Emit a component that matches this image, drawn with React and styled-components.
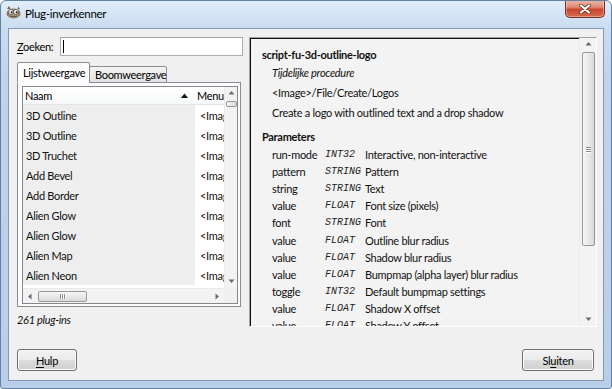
import React from "react";
import styled, { createGlobalStyle, css } from "styled-components";

const UI = `Lato, "Liberation Sans", "DejaVu Sans", sans-serif`;
const MONO = `"Liberation Mono", "DejaVu Sans Mono", monospace`;

const GlobalStyle = createGlobalStyle`
  html, body { margin: 0; padding: 0; background: #ffffff; }
  body { font-family: ${UI}; font-size: 11px; letter-spacing: -0.3px; color: #1e1e1e; }
  * { box-sizing: border-box; }
`;

const Window = styled.div`
  width: 612px;
  height: 389px;
  display: flex;
  flex-direction: column;
  border: 1px solid #62809f;
  border-radius: 6px 6px 3px 3px;
  background: linear-gradient(180deg, #e2edf9 0px, #cadcf1 27px, #bfd3ec 80px, #b9cee9 100%);
  overflow: hidden;
`;

const TitleBar = styled.div`
  height: 27px;
  flex: none;
  display: flex;
  align-items: flex-start;
  padding-left: 5px;
`;

const TitleIcon = styled.svg`
  margin-top: 4px;
  flex: none;
`;

const TitleText = styled.span`
  margin-top: 5px;
  margin-left: 4px;
  font-size: 11.5px;
  line-height: 15px;
  color: #000;
`;

const CloseButton = styled.div`
  margin-left: auto;
  margin-right: 6px;
  margin-top: -1px;
  width: 40px;
  height: 18px;
  border: 1px solid #7a2d22;
  border-top: none;
  border-radius: 0 0 5px 5px;
  background: linear-gradient(180deg, #ecb8ab 0%, #df8a75 42%, #c8482d 55%, #d66a4e 100%);
  box-shadow: inset 0 0 0 1px rgba(255, 255, 255, 0.35);
  display: flex;
  align-items: center;
  justify-content: center;
`;

const Client = styled.div`
  flex: 1;
  min-height: 0;
  margin: 0 7px 7px;
  background: #f0f0f0;
  border: 1px solid #8399b5;
  display: flex;
  flex-direction: column;
  padding: 8px 6px 9px 8px;
`;

const Main = styled.div`
  display: flex;
  gap: 6px;
  height: 290px;
  flex: none;
`;

const LeftPane = styled.div`
  width: 226px;
  flex: none;
  display: flex;
  flex-direction: column;
`;

const SearchRow = styled.div`
  display: flex;
  align-items: center;
  height: 19px;
  flex: none;
`;

const Label = styled.span`
  width: 43px;
  flex: none;
  color: #000;
`;

const Mnemonic = styled.span`
  text-decoration: underline;
  text-underline-offset: 2px;
`;

const SearchInput = styled.div`
  flex: 1;
  height: 19px;
  background: #fff;
  border: 1px solid #abadb3;
  border-top-color: #9ea1a8;
  display: flex;
  align-items: center;
  padding-left: 2px;
`;

const Caret = styled.span`
  width: 1px;
  height: 13px;
  background: #000;
`;

const Notebook = styled.div`
  margin-top: 6px;
  width: 224px;
  display: flex;
  flex-direction: column;
  flex: none;
`;

const TabStrip = styled.div`
  height: 21px;
  display: flex;
  align-items: flex-end;
  margin-bottom: -1px;
  position: relative;
  z-index: 1;
`;

const Tab = styled.div`
  border: 1px solid #898c95;
  border-radius: 2px 2px 0 0;
  display: flex;
  align-items: center;
  color: #000;
  white-space: nowrap;
  ${(p) =>
    p.$active
      ? css`
          height: 21px;
          width: 73px;
          padding-left: 5px;
          background: #fcfcfc;
          border-bottom-color: #fcfcfc;
        `
      : css`
          height: 17px;
          width: 78px;
          margin-left: -1px;
          padding-left: 5px;
          background: linear-gradient(180deg, #f4f4f4, #e2e2e2);
        `}
`;

const NotebookPage = styled.div`
  height: 225px;
  border: 1px solid #898c95;
  background: #fcfcfc;
  padding: 3px 2px 2px 4px;
`;

const TreeBox = styled.div`
  width: 216px;
  height: 218px;
  border: 1px solid #828790;
  background: #fff;
  display: grid;
  grid-template-columns: 201px 13px;
  grid-template-rows: 201px 15px;
`;

const ListArea = styled.div`
  overflow: hidden;
  display: flex;
  flex-direction: column;
  background: #fff;
`;

const HeaderRow = styled.div`
  height: 18px;
  flex: none;
  display: flex;
  background: linear-gradient(180deg, #ffffff, #f7f8f9);
  border-bottom: 1px solid #e5e5e5;
`;

const HeaderCell = styled.div`
  flex: none;
  width: ${(p) => p.$w}px;
  display: flex;
  align-items: center;
  padding-left: ${(p) => p.$pl}px;
  color: #000;
  white-space: nowrap;
`;

const SortArrow = styled.svg`
  margin-left: auto;
  margin-right: 7px;
`;

const Row = styled.div`
  height: 20px;
  flex: none;
  display: flex;
`;

const Cell = styled.div`
  flex: none;
  width: ${(p) => p.$w}px;
  display: flex;
  align-items: center;
  padding-left: ${(p) => p.$pl}px;
  white-space: nowrap;
  overflow: hidden;
  color: #111;
  background: ${(p) => (p.$sorted ? "#eeeeee" : "#ffffff")};
`;

const VBar = styled.div`
  width: ${(p) => p.$w}px;
  display: flex;
  flex-direction: column;
  align-items: center;
  background: #f3f3f3;
  border-left: 1px solid #eaeaea;
`;

const HBar = styled.div`
  height: 15px;
  display: flex;
  align-items: center;
  background: #f3f3f3;
  border-top: 1px solid #eaeaea;
`;

const Corner = styled.div`
  background: #f0f0f0;
`;

const ArrowSlot = styled.div`
  flex: none;
  width: ${(p) => (p.$w ? `${p.$w}px` : "100%")};
  height: ${(p) => (p.$h ? `${p.$h}px` : "100%")};
  display: flex;
  align-items: center;
  justify-content: center;
`;

const Thumb = styled.div`
  flex: none;
  width: ${(p) => p.$w}px;
  height: ${(p) => p.$h}px;
  margin: ${(p) => p.$m || "0"};
  border: 1px solid #979797;
  border-radius: 2px;
  background: ${(p) =>
    p.$horizontal
      ? "linear-gradient(180deg, #f6f6f6, #e9e9e9 50%, #d9d9d9)"
      : "linear-gradient(90deg, #f6f6f6, #e9e9e9 50%, #d9d9d9)"};
  display: flex;
  flex-direction: ${(p) => (p.$horizontal ? "row" : "column")};
  align-items: center;
  justify-content: center;
  gap: 1px;
`;

const GripLine = styled.span`
  display: block;
  background: #8a8a8a;
  width: ${(p) => (p.$horizontal ? "1px" : "5px")};
  height: ${(p) => (p.$horizontal ? "5px" : "1px")};
  box-shadow: ${(p) => (p.$horizontal ? "1px 0 0 #fff" : "0 1px 0 #fff")};
`;

const Fill = styled.div`
  flex: 1;
`;

const Status = styled.div`
  margin-top: 6px;
  height: 14px;
  line-height: 14px;
  font-style: italic;
  color: #111;
`;

const RightPane = styled.div`
  width: 348px;
  flex: none;
  display: flex;
  border: 1px solid;
  border-color: #a0a0a0 #ffffff #ffffff #a0a0a0;
`;

const TextView = styled.div`
  flex: 1;
  min-width: 0;
  overflow: hidden;
  border-top: 1px solid #101010;
  border-left: 1px solid #101010;
  background: #f3f3f3;
  padding: 8px 0 0 11px;
  display: flex;
  flex-direction: column;
`;

const Line = styled.div`
  flex: none;
  height: 16px;
  line-height: 16px;
  white-space: nowrap;
  color: #111;
  margin-top: ${(p) => p.$mt || 0}px;
  padding-left: ${(p) => (p.$indent ? 10 : 0)}px;
  font-weight: ${(p) => (p.$bold ? 700 : 400)};
  font-style: ${(p) => (p.$italic ? "italic" : "normal")};
`;

const ParamGrid = styled.div`
  flex: none;
  margin-top: 1px;
  padding-left: 10px;
  display: grid;
  grid-template-columns: 53px 40px auto;
  grid-auto-rows: 17.2px;
  align-items: center;
  white-space: nowrap;
  color: #111;
  line-height: 14px;
`;

const TypeCell = styled.span`
  font-family: ${MONO};
  font-style: italic;
  font-size: 10px;
  letter-spacing: 0;
  color: #222;
`;

const ButtonRow = styled.div`
  margin-top: 22px;
  padding-right: 3px;
  display: flex;
  justify-content: space-between;
  flex: none;
`;

const PushButton = styled.div`
  width: ${(p) => p.$w}px;
  height: 22px;
  border: 1px solid #707070;
  border-radius: 3px;
  background: linear-gradient(180deg, #f2f2f2 0%, #ebebeb 49%, #dddddd 50%, #cfcfcf 100%);
  box-shadow: inset 0 0 0 1px #fbfbfb;
  display: flex;
  align-items: center;
  justify-content: center;
  color: #000;
`;

const ArrowIcon = ({ dir }) => {
  const pts = {
    up: "0.5,4.5 3.5,1 6.5,4.5",
    down: "0.5,1.5 3.5,5 6.5,1.5",
    left: "4.5,0.5 1,3.5 4.5,6.5",
    right: "1.5,0.5 5,3.5 1.5,6.5",
  }[dir];
  return (
    <svg width="7" height="7" viewBox="0 0 7 7">
      <polygon points={pts} fill="#6a6a6a" />
    </svg>
  );
};

const names = [
  "3D Outline",
  "3D Outline",
  "3D Truchet",
  "Add Bevel",
  "Add Border",
  "Alien Glow",
  "Alien Glow",
  "Alien Map",
  "Alien Neon",
];

const params = [
  ["run-mode", "INT32", "Interactive, non-interactive"],
  ["pattern", "STRING", "Pattern"],
  ["string", "STRING", "Text"],
  ["value", "FLOAT", "Font size (pixels)"],
  ["font", "STRING", "Font"],
  ["value", "FLOAT", "Outline blur radius"],
  ["value", "FLOAT", "Shadow blur radius"],
  ["value", "FLOAT", "Bumpmap (alpha layer) blur radius"],
  ["toggle", "INT32", "Default bumpmap settings"],
  ["value", "FLOAT", "Shadow X offset"],
  ["value", "FLOAT", "Shadow Y offset"],
];

export default function App() {
  return (
    <>
      <GlobalStyle />
      <Window>
        <TitleBar>
          <TitleIcon width="15" height="14" viewBox="0 0 15 14">
            <path d="M1 4 L3 1 L4.5 4 Z" fill="#6b6152" />
            <path d="M12.5 1.5 L14 4.5 L11.5 4 Z" fill="#6b6152" />
            <ellipse cx="7.5" cy="8.5" rx="7" ry="5" fill="#8a7d68" />
            <ellipse cx="7.5" cy="10.5" rx="5" ry="2.6" fill="#a3957c" />
            <circle cx="5" cy="7" r="2.4" fill="#fff" stroke="#333" strokeWidth="0.6" />
            <circle cx="10" cy="7" r="2.4" fill="#fff" stroke="#333" strokeWidth="0.6" />
            <circle cx="5.6" cy="7.2" r="1" fill="#111" />
            <circle cx="10.6" cy="7.2" r="1" fill="#111" />
            <path d="M4 11 Q7.5 13 11 11" stroke="#3b342a" strokeWidth="0.8" fill="none" />
          </TitleIcon>
          <TitleText>Plug-inverkenner</TitleText>
          <CloseButton>
            <svg width="12" height="10" viewBox="0 0 12 10">
              <path d="M2 1.5 L10 8.5 M10 1.5 L2 8.5" stroke="#5a2218" strokeWidth="3.6" strokeLinecap="round" />
              <path d="M2 1.5 L10 8.5 M10 1.5 L2 8.5" stroke="#ffffff" strokeWidth="2.2" strokeLinecap="round" />
            </svg>
          </CloseButton>
        </TitleBar>
        <Client>
          <Main>
            <LeftPane>
              <SearchRow>
                <Label>
                  <Mnemonic>Z</Mnemonic>oeken:
                </Label>
                <SearchInput>
                  <Caret />
                </SearchInput>
              </SearchRow>
              <Notebook>
                <TabStrip>
                  <Tab $active>Lijstweergave</Tab>
                  <Tab>Boomweergave</Tab>
                </TabStrip>
                <NotebookPage>
                  <TreeBox>
                    <ListArea>
                      <HeaderRow>
                        <HeaderCell $w={172} $pl={2}>
                          Naam
                          <SortArrow width="7" height="5" viewBox="0 0 7 5">
                            <polygon points="0,5 3.5,0.5 7,5" fill="#111" />
                          </SortArrow>
                        </HeaderCell>
                        <HeaderCell $w={60} $pl={2}>
                          Menu
                        </HeaderCell>
                      </HeaderRow>
                      {names.map((n, i) => (
                        <Row key={i}>
                          <Cell $w={172} $pl={3} $sorted>
                            {n}
                          </Cell>
                          <Cell $w={60} $pl={5}>
                            {"<Image>/Filters"}
                          </Cell>
                        </Row>
                      ))}
                    </ListArea>
                    <VBar $w={13}>
                      <ArrowSlot $h={13}>
                        <ArrowIcon dir="up" />
                      </ArrowSlot>
                      <Thumb $w={11} $h={6} $m="1px 0 0" />
                      <Fill />
                      <ArrowSlot $h={13}>
                        <ArrowIcon dir="down" />
                      </ArrowSlot>
                    </VBar>
                    <HBar>
                      <ArrowSlot $w={14}>
                        <ArrowIcon dir="left" />
                      </ArrowSlot>
                      <Thumb $horizontal $w={49} $h={11} $m="0 0 0 1px">
                        <GripLine $horizontal />
                        <GripLine $horizontal />
                        <GripLine $horizontal />
                      </Thumb>
                      <Fill />
                      <ArrowSlot $w={14}>
                        <ArrowIcon dir="right" />
                      </ArrowSlot>
                    </HBar>
                    <Corner />
                  </TreeBox>
                </NotebookPage>
              </Notebook>
              <Status>261 plug-ins</Status>
            </LeftPane>
            <RightPane>
              <TextView>
                <Line $bold>script-fu-3d-outline-logo</Line>
                <Line $indent $italic $mt={2}>
                  Tijdelijke procedure
                </Line>
                <Line $indent $mt={4}>
                  {"<Image>/File/Create/Logos"}
                </Line>
                <Line $indent $mt={4}>
                  Create a logo with outlined text and a drop shadow
                </Line>
                <Line $bold $mt={8}>
                  Parameters
                </Line>
                <ParamGrid>
                  {params.map(([name, type, desc], i) => (
                    <React.Fragment key={i}>
                      <span>{name}</span>
                      <TypeCell>{type}</TypeCell>
                      <span>{desc}</span>
                    </React.Fragment>
                  ))}
                </ParamGrid>
              </TextView>
              <VBar $w={17}>
                <ArrowSlot $h={13}>
                  <ArrowIcon dir="up" />
                </ArrowSlot>
                <Thumb $w={13} $h={194} $m="1px 0 0">
                  <GripLine />
                  <GripLine />
                  <GripLine />
                </Thumb>
                <Fill />
                <ArrowSlot $h={13}>
                  <ArrowIcon dir="down" />
                </ArrowSlot>
              </VBar>
            </RightPane>
          </Main>
          <ButtonRow>
            <PushButton $w={60}>
              <span>
                <Mnemonic>H</Mnemonic>ulp
              </span>
            </PushButton>
            <PushButton $w={72}>
              <span>
                Sl<Mnemonic>u</Mnemonic>iten
              </span>
            </PushButton>
          </ButtonRow>
        </Client>
      </Window>
    </>
  );
}
